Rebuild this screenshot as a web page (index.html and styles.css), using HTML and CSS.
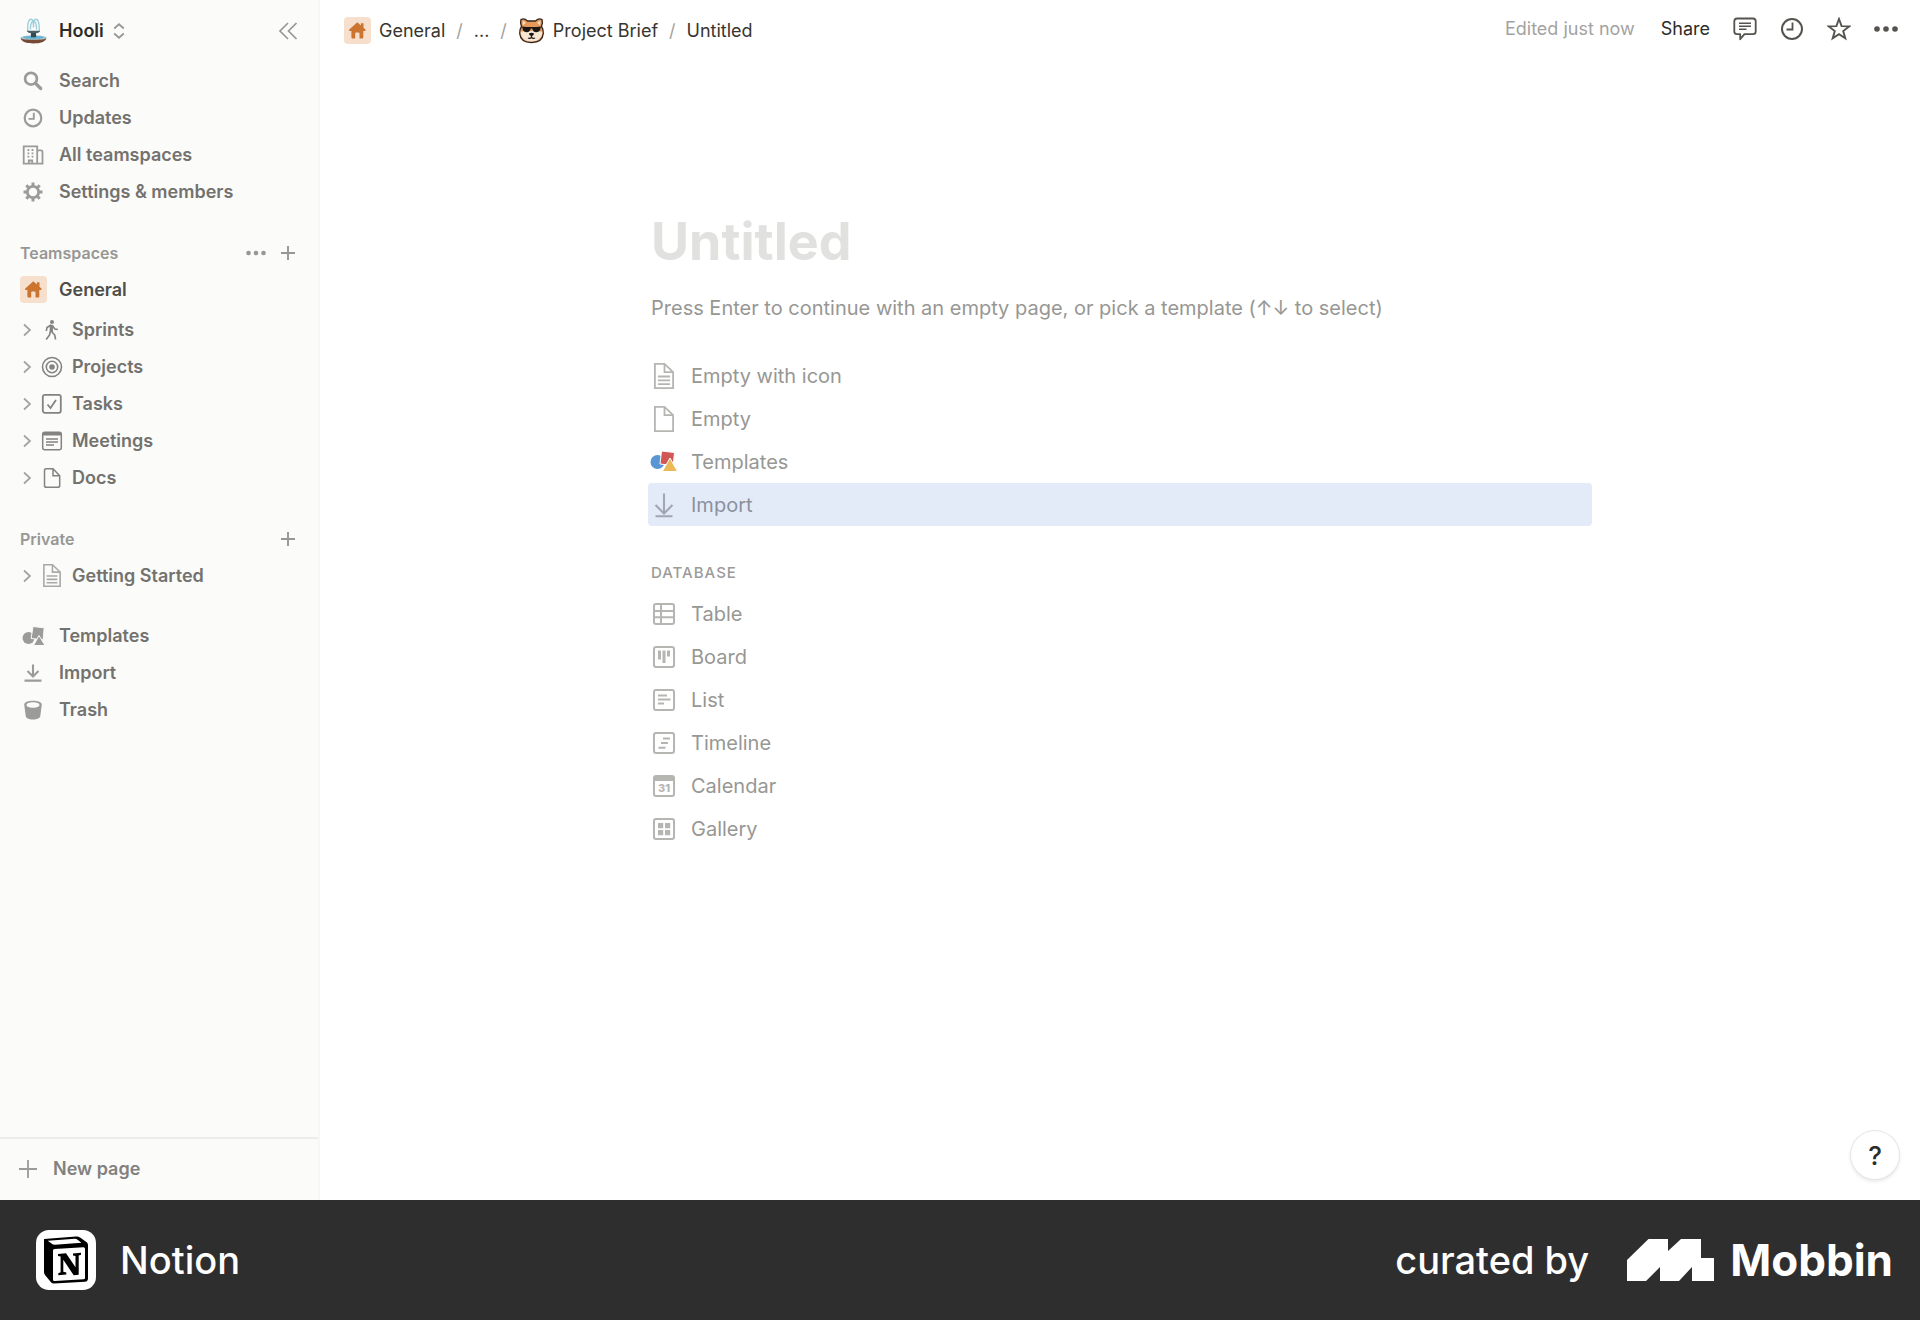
FILE: index.html
```html
<!DOCTYPE html>
<html lang="en">
<head>
<meta charset="utf-8">
<meta name="viewport" content="width=device-width, initial-scale=1">
<title>Untitled</title>
<link rel="stylesheet" href="styles.css">
</head>
<body>
<svg class="sprite" aria-hidden="true">
  <symbol id="i-house" viewBox="0 0 27 27"><rect width="27" height="27" rx="4" fill="#f6dfcd"/><path d="M13.3 5.2 5.3 12.6c-.6.6-.3 1.5.6 1.5h1.5v6.1c0 .9.5 1.4 1.4 1.4h2.4v-5.2c0-.5.3-.8.8-.8h2.7c.5 0 .8.3.8.8v5.2h2.4c.9 0 1.4-.5 1.4-1.4v-6.1h1.5c.9 0 1.2-.9.6-1.5l-1.9-1.8V6.3h-2.6v2.1z" fill="#cb7430"/></symbol>
  <symbol id="i-chev" viewBox="0 0 10 14"><path d="M2 1.500 8 7l-6 5.500" fill="none" stroke="currentColor" stroke-width="1.700"/></symbol>
  <symbol id="i-plus" viewBox="0 0 20 20"><path d="M10 3v14M3 10h14" fill="none" stroke="currentColor" stroke-width="1.900"/></symbol>
  <symbol id="i-dots" viewBox="0 0 24 24"><g fill="currentColor"><circle cx="3" cy="12" r="2.800"/><circle cx="12" cy="12" r="2.800"/><circle cx="21" cy="12" r="2.800"/></g></symbol>
  <symbol id="i-clock" viewBox="0 0 24 24"><circle cx="12" cy="12" r="10" fill="none" stroke="currentColor" stroke-width="2"/><path d="M12.500 5.500v7h-6" fill="none" stroke="currentColor" stroke-width="1.800"/></symbol>
  <symbol id="i-textpage" viewBox="0 0 24 28"><g fill="none" stroke="currentColor" stroke-width="1.800"><path d="M2.900 1.900h9.600l8.600 8.200v16H2.900z"/><path d="M12.500 2v8.200h8.500M6 14.500h12M6 18.300h12M6 22.100h12"/></g></symbol>
  <symbol id="i-page" viewBox="0 0 24 28"><g fill="none" stroke="currentColor" stroke-width="1.800"><path d="M2.900 1.900h9.600l8.600 8.200v16H2.900z"/><path d="M12.500 2v8.200h8.500"/></g></symbol>
</svg>
<div class="app">
  <nav class="sidebar" aria-label="Workspace">
    <div class="workspace">
      <button class="switcher" type="button">
        <svg class="icon-lg" viewBox="0 0 26 26"><path d="M7.500 14C7 5.500 8.500 2.200 10.700 2.200S13 5 13 10c0-5 .2-7.800 2.300-7.800S18.800 5.500 18.500 14M10 12c0-6 1-7.500 3-8.500 2 1 3 2.500 3 8.500" fill="none" stroke="#9bcfda" stroke-width="1.300"/><path d="M6.500 13.300h13c-.8 1.800-2.700 2.200-4.500 2.500l.7 4.500h-5.400l.7-4.500c-1.800-.3-3.700-.7-4.500-2.500z" fill="#4b6068"/><ellipse cx="13" cy="20" rx="12.500" ry="2.500" fill="#a9c6cd"/><ellipse cx="13" cy="19.700" rx="10" ry="1.500" fill="#63b4d6"/><path d="M10.500 15.500h5v4h-5z" fill="#344950"/><path d="M.5 20.500c3 2 22 2 25 0-1 3.500-6 5-12.500 5S1.500 24 .5 20.500z" fill="#764a35"/></svg>
        <span>Hooli</span>
        <svg class="sort" viewBox="0 0 12 16"><path d="M1.200 5.500 6 1.300l4.800 4.200M1.200 10.500 6 14.700l4.800-4.200" fill="none" stroke="#979794" stroke-width="1.800"/></svg>
      </button>
      <button class="tool" type="button" aria-label="Close sidebar"><svg viewBox="0 0 20 20"><path d="M10 2 2 10l8 8M18.500 2l-8 8 8 8" fill="none" stroke="currentColor" stroke-width="1.700"/></svg></button>
    </div>
    <ul class="menu">
      <li><a href="#"><svg class="glyph" viewBox="0 0 22 22"><circle cx="9" cy="8.700" r="5.900" fill="none" stroke="currentColor" stroke-width="2.700"/><path d="m13.700 13.500 5 5" stroke="currentColor" stroke-width="3.200" stroke-linecap="round"/></svg>Search</a></li>
      <li><a href="#"><svg class="glyph" viewBox="0 0 22 22"><circle cx="11" cy="11" r="8.300" fill="none" stroke="currentColor" stroke-width="2.200"/><path d="M11.800 5.800v6.100H6.500" fill="none" stroke="currentColor" stroke-width="1.900"/></svg>Updates</a></li>
      <li><a href="#"><svg class="glyph" viewBox="0 0 22 22"><g fill="none" stroke="currentColor" stroke-width="1.800"><path d="M1.700 2.300h13.500v17.400H1.700zM15.200 6.300H19c1 0 1.500.5 1.500 1.500v11.900h-5.300M6.800 19.700v-3.200h3.400v3.200"/><path d="M5.500 6h1.800M9.600 6h1.800M5.500 9.300h1.800M9.600 9.300h1.800M5.500 12.600h1.800M9.600 12.600h1.800"/></g></svg>All teamspaces</a></li>
      <li><a href="#"><svg class="glyph" viewBox="0 0 22 22"><circle cx="11" cy="11" r="5.700" fill="none" stroke="currentColor" stroke-width="2.800"/><path d="M11 1.500V5M11 17v3.500M1.500 11H5M17 11h3.500M4.300 4.300l2.400 2.400M15.300 15.300l2.400 2.400M17.700 4.300l-2.400 2.400M4.300 17.700l2.400-2.400" stroke="currentColor" stroke-width="3"/></svg>Settings &amp; members</a></li>
    </ul>

    <div class="heading"><h2>Teamspaces</h2>
      <button class="tool" type="button" aria-label="More"><svg viewBox="0 0 24 24"><use href="#i-dots"/></svg></button>
      <button class="tool" type="button" aria-label="Add teamspace"><svg viewBox="0 0 20 20"><use href="#i-plus"/></svg></button></div>
    <ul class="menu">
      <li><a class="strong" href="#"><svg class="icon-lg" viewBox="0 0 27 27"><use href="#i-house"/></svg>General</a></li>
      <li><a class="nested" href="#"><svg class="chev"><use href="#i-chev"/></svg><svg class="glyph" viewBox="0 0 22 22"><circle cx="11" cy="3" r="2" fill="currentColor"/><path d="m10 6-4 2.500-.7 3.500M10.500 6.300v6.200l3.200 3.500.9 4.500M9.500 12l-1 4-3.300 4.500M11.500 6.700l2.300 3.300 3 .5" fill="none" stroke="currentColor" stroke-width="1.600" stroke-linejoin="round"/><path d="M8.700 5.700h3.200v7.500l-3.200-1z" fill="currentColor"/></svg>Sprints</a></li>
      <li><a class="nested" href="#"><svg class="chev"><use href="#i-chev"/></svg><svg class="glyph" viewBox="0 0 22 22"><g fill="none" stroke="currentColor" stroke-width="1.600"><circle cx="11" cy="11" r="9.500"/><circle cx="11" cy="11" r="5.700"/></g><circle cx="11" cy="11" r="2.800" fill="currentColor"/></svg>Projects</a></li>
      <li><a class="nested" href="#"><svg class="chev"><use href="#i-chev"/></svg><svg class="glyph" viewBox="0 0 22 22"><g fill="none" stroke="currentColor" stroke-width="1.800"><rect x="1.800" y="1.800" width="18" height="18" rx="2"/><path d="m6.500 11.500 3 3.500 5.500-8"/></g></svg>Tasks</a></li>
      <li><a class="nested" href="#"><svg class="chev"><use href="#i-chev"/></svg><svg class="glyph" viewBox="0 0 22 22"><rect x="1.700" y="2.200" width="18.600" height="17.500" rx="2" fill="none" stroke="currentColor" stroke-width="1.500"/><path d="M2 2.200h18v3.300H2z" fill="currentColor"/><path d="M5 9h12M5 12h12M5 15h8" stroke="currentColor" stroke-width="1.400"/></svg>Meetings</a></li>
      <li><a class="nested" href="#"><svg class="chev"><use href="#i-chev"/></svg><svg class="glyph" viewBox="0 0 22 22"><path d="M5.200 1.700h6.800l6.700 7v9.700q0 1.900-1.900 1.900H5.400q-1.900 0-1.900-1.900V3.400q0-1.700 1.700-1.700zM12 1.700v7h6.700" fill="none" stroke="currentColor" stroke-width="1.500"/></svg>Docs</a></li>
    </ul>

    <div class="heading"><h2>Private</h2>
      <button class="tool" type="button" aria-label="Add page"><svg viewBox="0 0 20 20"><use href="#i-plus"/></svg></button></div>
    <ul class="menu">
      <li><a class="nested pale" href="#"><svg class="chev"><use href="#i-chev"/></svg><svg class="glyph" viewBox="0 0 24 28"><use href="#i-textpage"/></svg>Getting Started</a></li>
    </ul>
    <ul class="menu extra">
      <li><a href="#"><svg class="glyph" viewBox="0 0 22 22"><g fill="currentColor"><circle cx="6.500" cy="13" r="6"/><path d="m11 1.500 11.200 1.300-1.100 12-12-1.300z" stroke="#fbfbfa" stroke-width="1"/><path d="m17 10.500 6 10H11.500z" stroke="#fbfbfa" stroke-width="1"/></g></svg>Templates</a></li>
      <li><a href="#"><svg class="glyph" viewBox="0 0 22 22"><path d="M11 2.500v12M5.500 9l5.500 5.500L16.500 9M2.500 18.600h17" fill="none" stroke="currentColor" stroke-width="2.100"/></svg>Import</a></li>
      <li><a href="#"><svg class="glyph" viewBox="0 0 22 22"><path fill-rule="evenodd" d="M2.200 5.500C2.200 3 6.200 1.700 11 1.700s8.800 1.300 8.800 3.800L18.300 17c-.3 2.300-3 3.500-7.300 3.500S4 19.300 3.700 17zM11 3.300C7 3.300 4.500 4.400 4.500 6S7 8.700 11 8.700s6.500-1.100 6.500-2.700S15 3.300 11 3.300z" fill="currentColor"/></svg>Trash</a></li>
    </ul>
    <button class="new-page" type="button"><svg viewBox="0 0 20 20"><path d="M10 1v18M1 10h18" stroke="currentColor" stroke-width="1.800"/></svg>New page</button>
  </nav>

  <div class="main">
    <header class="topbar">
      <nav class="crumbs" aria-label="Breadcrumb">
        <a href="#"><svg class="icon-lg" viewBox="0 0 27 27"><use href="#i-house"/></svg>General</a><span class="slash">/</span>
        <a href="#">...</a><span class="slash">/</span>
        <a href="#"><svg class="icon-lg" viewBox="0 0 27 27"><path d="M3 2.500c3-1.500 5 0 6.500 1.500h8c1.500-1.500 3.500-3 6.500-1.500.8 2.500.3 5-.5 7 1.500 2 2 4 1.800 7-.5 6-5 9-11.800 9s-11.300-3-11.800-9c-.2-3 .3-5 1.800-7C2.700 7.500 2.200 5 3 2.500z" fill="#e59a5c" stroke="#33231b" stroke-width="1.300"/><path d="M2.700 14.500c4 0 7-2 10.800-.5 3.800-1.500 6.800.5 10.800.5.300 6-4 10-10.800 10s-11.100-4-10.800-10z" fill="#f8e5d2"/><path d="M4.500 4.200c1.500-.3 2.500.6 3.300 1.500L5 8.500zM22.500 4.200c-1.500-.3-2.500.6-3.300 1.500L22 8.500z" fill="#f8dfca"/><path d="M4 9.500c6 .8 13 .8 19 0l-.8 3c-.5 2-2 2.700-4 2.700-2.300 0-3.400-1.500-4-3.700h-1.400c-.6 2.200-1.700 3.700-4 3.700-2 0-3.500-.7-4-2.700zM11 16.500q2.500-1.500 5 0c0 1.500-1.200 2.500-2.500 2.500S11 18 11 16.500z" fill="#191615"/><path d="M13.500 18.500v2m-3.500.5q1.800 1 3.500-.5 1.700 1.500 3.500.5" fill="none" stroke="#191615" stroke-width="1.200"/></svg>Project Brief</a><span class="slash">/</span>
        <a href="#">Untitled</a>
      </nav>
      <div class="actions">
        <span class="edited">Edited just now</span>
        <button class="share" type="button">Share</button>
        <button class="action" type="button" aria-label="Comments"><svg viewBox="0 0 24 24"><g fill="none" stroke="currentColor" stroke-width="1.800" stroke-linejoin="round"><path d="M4 1.500h16q2.700 0 2.700 2.700v10.300q0 2.700-2.700 2.700h-8.500l-4.300 5v-5H4q-2.700 0-2.700-2.700V4.200Q1.300 1.500 4 1.500z"/><path d="M6 6.300h12M6 9.300h12M6 12.300h7.500" stroke-width="1.400"/></g></svg></button>
        <button class="action" type="button" aria-label="History"><svg viewBox="0 0 24 24"><use href="#i-clock"/></svg></button>
        <button class="action" type="button" aria-label="Favorite"><svg viewBox="0 0 24 24"><path d="m12 2 2.600 7.100 7.600.3-6 4.600 2.100 7.400L12 17.200l-6.300 4.200L7.800 14l-6-4.600 7.600-.3z" fill="none" stroke="currentColor" stroke-width="1.900" stroke-linejoin="miter"/></svg></button>
        <button class="action" type="button" aria-label="More options"><svg viewBox="0 0 24 24"><use href="#i-dots"/></svg></button>
      </div>
    </header>
    <main class="page">
      <h1>Untitled</h1>
      <p class="hint">Press Enter to continue with an empty page, or pick a template (↑↓ to select)</p>
      <ul class="options">
        <li><button type="button"><svg class="doc" viewBox="0 0 24 28"><use href="#i-textpage"/></svg>Empty with icon</button></li>
        <li><button type="button"><svg class="doc" viewBox="0 0 24 28"><use href="#i-page"/></svg>Empty</button></li>
        <li><button type="button"><svg viewBox="0 0 28 28"><circle cx="7.500" cy="14" r="7" fill="#5897d3"/><path d="m11.500 3 13 1.500-1.300 13-13.200-1.500z" fill="#d15656" stroke="#fff"/><path d="m20 10 7.500 13.500H12.300z" fill="#ecb958" stroke="#fff"/></svg>Templates</button></li>
        <li><button class="selected" type="button"><svg viewBox="0 0 28 28"><path d="M14 2.500v20M5.500 14l8.500 8.500 8.500-8.500M5.500 25.200h17" fill="none" stroke="currentColor" stroke-width="2.100"/></svg>Import</button></li>
      </ul>
      <h2>DATABASE</h2>
      <ul class="options">
        <li><button type="button"><svg viewBox="0 0 28 28"><g fill="none" stroke="currentColor" stroke-width="2"><rect x="4" y="4" width="20" height="20" rx="2"/><path d="M4 11h20M4 17.300h20M11 4v20"/></g></svg>Table</button></li>
        <li><button type="button"><svg viewBox="0 0 28 28"><rect x="4" y="4" width="20" height="20" rx="2" fill="none" stroke="currentColor" stroke-width="2"/><path d="M9.500 7.500v9M14 7.500v12.500M18.500 7.500v6" stroke="currentColor" stroke-width="3"/></svg>Board</button></li>
        <li><button type="button"><svg viewBox="0 0 28 28"><g fill="none" stroke="currentColor" stroke-width="2"><rect x="4" y="4" width="20" height="20" rx="2"/><path d="M8 9.500h9M8 13.500h12.500M8 17.500h6"/></g></svg>List</button></li>
        <li><button type="button"><svg viewBox="0 0 28 28"><g fill="none" stroke="currentColor" stroke-width="2"><rect x="4" y="4" width="20" height="20" rx="2"/><path d="M13 9.500h7M11 14h7M8.500 18.800h7"/></g></svg>Timeline</button></li>
        <li><button type="button"><svg viewBox="0 0 28 28"><rect x="4" y="4" width="20" height="20" rx="2" fill="none" stroke="currentColor" stroke-width="2"/><path d="M4 4h20v5H4z" fill="currentColor"/><text x="14" y="20" class="date">31</text></svg>Calendar</button></li>
        <li><button type="button"><svg viewBox="0 0 28 28"><rect x="4" y="4" width="20" height="20" rx="2" fill="none" stroke="currentColor" stroke-width="2"/><path d="M8 8h5.200v5.200H8zM15 8h5.200v5.200H15zM8 15h5.200v5.200H8zM15 15h5.200v5.200H15z" fill="currentColor"/></svg>Gallery</button></li>
      </ul>
    </main>
    <button class="help" type="button" aria-label="Help">?</button>
  </div>
</div>
<footer class="footer">
  <svg class="notion-logo" viewBox="0 0 60 60"><rect width="60" height="60" rx="13" fill="#fff"/><path d="m8 9 32-2.500c2 0 3 .3 4.500 1.300L51 12.500q1 1 1 2.500v33.500q0 3-3 3.200L18 53.500q-2 0-3-1.300L9 45q-1-1.300-1-3z" fill="#000"/><path d="m12 10.800 27-2 1.500.3 5 3.700-26.500 1.900-2-.3-5-3.400zM17 20.500q0-1.500 1.500-1.600l29-1.700q1.500 0 1.500 1.500v29q0 1.500-1.500 1.600L18.500 51Q17 51 17 49.500z" fill="#fff"/><path d="m22 24 8-.8 9.500 14V26l-2.500-.5v-2l8-.8v2l-2.300.8v19.300l-5 .5-10.400-15.500v12l3 .8v2l-8 .6v-2l2.300-1V26.500L22 26z" fill="#000"/></svg>
  <span class="brand">Notion</span>
  <span class="curated">curated by</span>
  <svg class="mobbin-logo" viewBox="0 0 87 42"><path d="M0 21 21.500 0H41v12L54 0h20v19h13v23H65V28L52 42H33V28L19 42H0z" fill="#fff"/></svg>
  <span class="mobbin">Mobbin</span>
</footer>
</body>
</html>
```
FILE: styles.css
```css
* { box-sizing: border-box; }
body {
  margin: 0;
  min-height: 100vh;
  display: flex;
  flex-direction: column;
  font-family: Inter, "Liberation Sans", sans-serif;
  background: #fff;
  color: #37352f;
}
button {
  border: 0;
  padding: 0;
  background: none;
  font: inherit;
  color: inherit;
  text-align: left;
  display: flex;
  align-items: center;
  cursor: pointer;
}
a { color: inherit; text-decoration: none; }
ul { list-style: none; margin: 0; padding: 0; }
h1, h2, p { margin: 0; }
svg { display: block; flex: none; }
.sprite { position: absolute; width: 0; height: 0; }

.app { flex: 1; display: flex; }

/* Sidebar */
.sidebar {
  width: 320px;
  flex: none;
  display: flex;
  flex-direction: column;
  background: #fbfbfa;
  border-right: 2px solid #f7f7f6;
  font-size: 18px;
  font-weight: 600;
}
.workspace {
  height: 61px;
  display: flex;
  align-items: center;
  justify-content: space-between;
  padding: 0 18px 0 20px;
}
.switcher { color: #2d2c28; gap: 12px; }
.switcher .sort { margin-left: -3px; }
.icon-lg { width: 27px; height: 27px; }
.sort { width: 12px; height: 16px; }
.tool {
  width: 24px;
  height: 24px;
  justify-content: center;
  color: #979794;
}
.tool svg { width: 20px; height: 20px; }
.menu a {
  height: 37px;
  display: flex;
  align-items: center;
  gap: 12px;
  padding-left: 20px;
  color: #73726e;
}
.workspace + .menu { margin-top: 1px; }
.menu .strong { color: #4e4d49; margin-bottom: 3px; }
.glyph { width: 22px; height: 22px; color: #9b9b98; overflow: visible; }
a > .glyph:first-child { margin: 0 3px 0 2px; }
.menu .nested { gap: 9px; padding-left: 22px; }
.nested .glyph { color: #84837f; }
.nested.pale .glyph { color: #a9a9a6; height: 25px; }
.chev { width: 10px; height: 14px; color: #a2a29f; }
.heading {
  height: 36px;
  margin-top: 25px;
  padding: 0 18px 0 20px;
  display: flex;
  align-items: center;
  gap: 8px;
}
.heading h2 { flex: 1; font-size: 16px; font-weight: 600; color: #979794; }
.extra { margin-top: 23px; }
.new-page {
  margin-top: auto;
  height: 63px;
  padding: 0 0 2px 18px;
  gap: 15px;
  border-top: 2px solid #ececeb;
  color: #82817e;
}
.new-page svg { width: 20px; height: 20px; color: #9b9b98; }

/* Top bar */
.main { flex: 1; min-width: 0; position: relative; }
.topbar {
  height: 60px;
  display: flex;
  align-items: center;
  justify-content: space-between;
  padding: 0 22px 0 24px;
  font-size: 18px;
}
.crumbs, .crumbs a { display: flex; align-items: center; }
.crumbs { gap: 11px; }
.crumbs a { gap: 8px; }
.slash { color: #a3a29f; }
.actions { display: flex; align-items: center; gap: 23px; padding-bottom: 3px; }
.edited { color: #a3a29f; margin-right: 3px; }
.share { color: #2d2c28; }
.action { color: #55534e; }
.action svg { width: 24px; height: 24px; }

/* Page */
.page { max-width: 944px; margin: 0 auto; padding: 148px 0 60px; }
.page h1 {
  padding-left: 3px;
  font-size: 52px;
  line-height: 68px;
  font-weight: 700;
  color: #e1e1e0;
}
.hint {
  padding: 17px 3px 0;
  font-size: 20px;
  line-height: 30px;
  color: #979794;
}
.options { margin-top: 31px; }
.options button {
  width: 100%;
  height: 43px;
  padding-left: 2px;
  gap: 13px;
  border-radius: 4px;
  font-size: 20px;
  color: #979794;
}
.options svg { width: 28px; height: 28px; color: #b5b5b2; }
.options .selected { background: #e3ebf9; color: #8b919c; }
.selected svg { color: #a0a7b3; }
.page h2 {
  margin-top: 37px;
  padding-left: 3px;
  font-size: 15px;
  line-height: 20px;
  font-weight: 500;
  letter-spacing: 1px;
  color: #9b9b98;
}
h2 + .options { margin-top: 9px; }
.date { font-size: 11px; font-weight: 800; text-anchor: middle; fill: currentColor; }
.help {
  position: absolute;
  right: 21px;
  bottom: 21px;
  width: 48px;
  height: 48px;
  justify-content: center;
  border-radius: 50%;
  background: #fff;
  box-shadow: 0 0 0 1px #e6e6e5, 0 2px 4px #0000001f;
  font-size: 26px;
  font-weight: 500;
  color: #2d2c28;
}

/* Footer */
.footer {
  height: 120px;
  display: flex;
  align-items: center;
  padding: 0 27px 0 36px;
  background: #2e2e2e;
  color: #fff;
  font-size: 38px;
  font-weight: 500;
}
.notion-logo { width: 60px; height: 60px; }
.brand { margin-left: 24px; }
.curated { margin-left: auto; }
.mobbin-logo { width: 87px; height: 42px; margin: 0 16px 0 38px; }
.mobbin { font-size: 44px; font-weight: 700; }
```
